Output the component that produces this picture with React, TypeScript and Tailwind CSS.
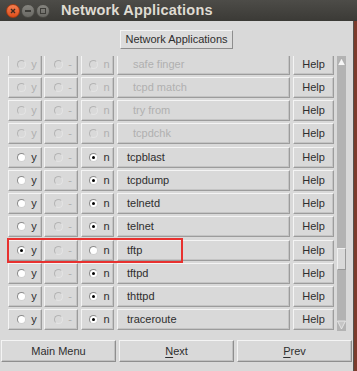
import React from 'react';

type Row = { name: string; disabled?: boolean; sel?: 'y' | 'n' };

const rows: Row[] = [
  { name: 'safe finger', disabled: true },
  { name: 'tcpd match', disabled: true },
  { name: 'try from', disabled: true },
  { name: 'tcpdchk', disabled: true },
  { name: 'tcpblast', sel: 'n' },
  { name: 'tcpdump', sel: 'n' },
  { name: 'telnetd', sel: 'n' },
  { name: 'telnet', sel: 'n' },
  { name: 'tftp', sel: 'y' },
  { name: 'tftpd', sel: 'n' },
  { name: 'thttpd', sel: 'n' },
  { name: 'traceroute', sel: 'n' },
];

const cell =
  'h-full bg-[#d9d9d9] border border-t-[#f4f4f4] border-l-[#f4f4f4] border-b-[#9c9c9c] border-r-[#9c9c9c] shadow-[inset_-1px_-1px_0_#c4c4c4]';

function Radio({ on, disabled }: { on?: boolean; disabled?: boolean }) {
  if (disabled) {
    return (
      <span className="w-[9px] h-[9px] rounded-full border border-[#b4b4b4] border-r-[#e4e4e4] border-b-[#e4e4e4] bg-[#d9d9d9]" />
    );
  }
  return (
    <span className="w-[9px] h-[9px] rounded-full border border-[#8a8a8a] border-r-[#d0d0d0] border-b-[#d0d0d0] bg-white flex items-center justify-center">
      {on && <span className="w-[3px] h-[3px] rounded-full bg-black" />}
    </span>
  );
}

function Choice({
  label,
  on,
  disabled,
  width,
}: {
  label: string;
  on?: boolean;
  disabled?: boolean;
  width: string;
}) {
  return (
    <div className={`${cell} ${width} flex items-center justify-center gap-[5px] pl-[4px]`}>
      <Radio on={on} disabled={disabled} />
      <span className={disabled ? 'text-[#b0b0b0]' : 'text-[#2e2e2e]'}>{label}</span>
    </div>
  );
}

function WinButton({ children, className }: { children: React.ReactNode; className: string }) {
  return (
    <div className={`w-[14px] h-[14px] rounded-full flex items-center justify-center ${className}`}>
      {children}
    </div>
  );
}

function BottomButton({ children }: { children: React.ReactNode }) {
  return (
    <button className="w-[115px] h-[22px] bg-[#d9d9d9] border border-t-[#f4f4f4] border-l-[#f4f4f4] border-b-[#8e8e8e] border-r-[#8e8e8e] shadow-[inset_-1px_-1px_0_#c0c0c0] text-[#2e2e2e] flex items-center justify-center">
      {children}
    </button>
  );
}

export default function App() {
  return (
    <div
      className="w-[357px] h-[371px] bg-[#7c3b2c] overflow-hidden flex flex-col text-[11px] leading-none"
      style={{ fontFamily: '"Liberation Sans", Arial, sans-serif' }}
    >
      {/* Title bar */}
      <div className="h-[21px] w-full bg-gradient-to-b from-[#4d4c48] to-[#3b3a36] flex items-center pl-[6px] shrink-0">
        <div className="flex items-center gap-0">
          <WinButton className="bg-gradient-to-b from-[#f47f50] to-[#df4d18] border border-[#a63b12]">
            <svg width="6" height="6" viewBox="0 0 6 6">
              <path d="M1 1L5 5M5 1L1 5" stroke="#3c2a20" strokeWidth="1.4" />
            </svg>
          </WinButton>
          <WinButton className="ml-[1px] bg-gradient-to-b from-[#85847f] to-[#6a6964] border border-[#4a4944]">
            <span className="w-[6px] h-[2px] bg-[#3e3d39]" />
          </WinButton>
          <WinButton className="ml-[1px] bg-gradient-to-b from-[#85847f] to-[#6a6964] border border-[#4a4944]">
            <span className="w-[6px] h-[6px] border-[1.5px] border-[#3e3d39]" />
          </WinButton>
        </div>
        <span className="ml-[11px] text-[14.5px] font-bold text-[#dfdbd2] tracking-[0.2px]">
          Network Applications
        </span>
      </div>

      {/* Window body */}
      <div className="relative w-[354px] flex-1 bg-[#d9d9d9] border-r border-[#55524d] flex flex-col">
        <div className="h-[35px] flex items-center justify-center shrink-0 pt-[2px]">
          <button className="w-[113px] h-[19px] bg-[#dcdcdc] border border-t-[#f4f4f4] border-l-[#f4f4f4] border-b-[#8e8e8e] border-r-[#8e8e8e] text-[#2e2e2e] flex items-center justify-center">
            Network Applications
          </button>
        </div>

        {/* List */}
        <div className="h-[275px] flex shrink-0">
          <div className="w-[8px]" />
          <div className="w-[326px] overflow-hidden">
            <div className="-mt-[2.5px] flex flex-col gap-[2.25px]">
              {rows.map((r) => (
                <div key={r.name} className="h-[21px] flex">
                  <Choice label="y" width="w-[34px]" on={r.sel === 'y'} disabled={r.disabled} />
                  <div className="w-[2px]" />
                  <Choice label="-" width="w-[34px]" disabled />
                  <div className="w-[3px]" />
                  <Choice label="n" width="w-[33px]" on={r.sel === 'n'} disabled={r.disabled} />
                  <div className="w-[3px]" />
                  <div
                    className={`${cell} w-[173px] flex items-center ${
                      r.disabled ? 'pl-[15px] text-[#b0b0b0]' : 'pl-[9px] text-[#2e2e2e]'
                    }`}
                  >
                    {r.name}
                  </div>
                  <div className="w-[3px]" />
                  <div className={`${cell} w-[41px] flex items-center justify-center text-[#2e2e2e]`}>
                    Help
                  </div>
                </div>
              ))}
            </div>
          </div>
          {/* Scrollbar */}
          <div className="w-[3px]" />
          <div className="w-[9px] h-full bg-[#b3b3b3] flex flex-col items-center justify-between pt-[1px] pb-[1px] relative">
            <svg width="9" height="9" viewBox="0 0 9 9">
              <path d="M4.5 1L8.5 8.5H0.5Z" fill="#f6f6f6" stroke="#a0a0a0" strokeWidth="0.6" />
            </svg>
            <div className="absolute left-0 top-[192px] w-[9px] h-[22px] bg-[#d9d9d9] border border-t-[#f0f0f0] border-l-[#f0f0f0] border-b-[#999999] border-r-[#999999]" />
            <svg width="9" height="10" viewBox="0 0 9 10">
              <path d="M0.5 1H8.5L4.5 9Z" fill="#c6c6c6" stroke="#eeeeee" strokeWidth="0.8" />
            </svg>
          </div>
        </div>

        {/* Bottom buttons */}
        <div className="mt-[9px] flex gap-[3px] pl-[1px]">
          <BottomButton>Main Menu</BottomButton>
          <BottomButton>
            <span>
              <span className="underline underline-offset-2">N</span>ext
            </span>
          </BottomButton>
          <BottomButton>
            <span>
              <span className="underline underline-offset-2">P</span>rev
            </span>
          </BottomButton>
        </div>

        {/* Highlight box */}
        <div className="absolute left-[7px] top-[217px] w-[176px] h-[25px] border-2 border-[#e8312f]" />
      </div>
    </div>
  );
}
